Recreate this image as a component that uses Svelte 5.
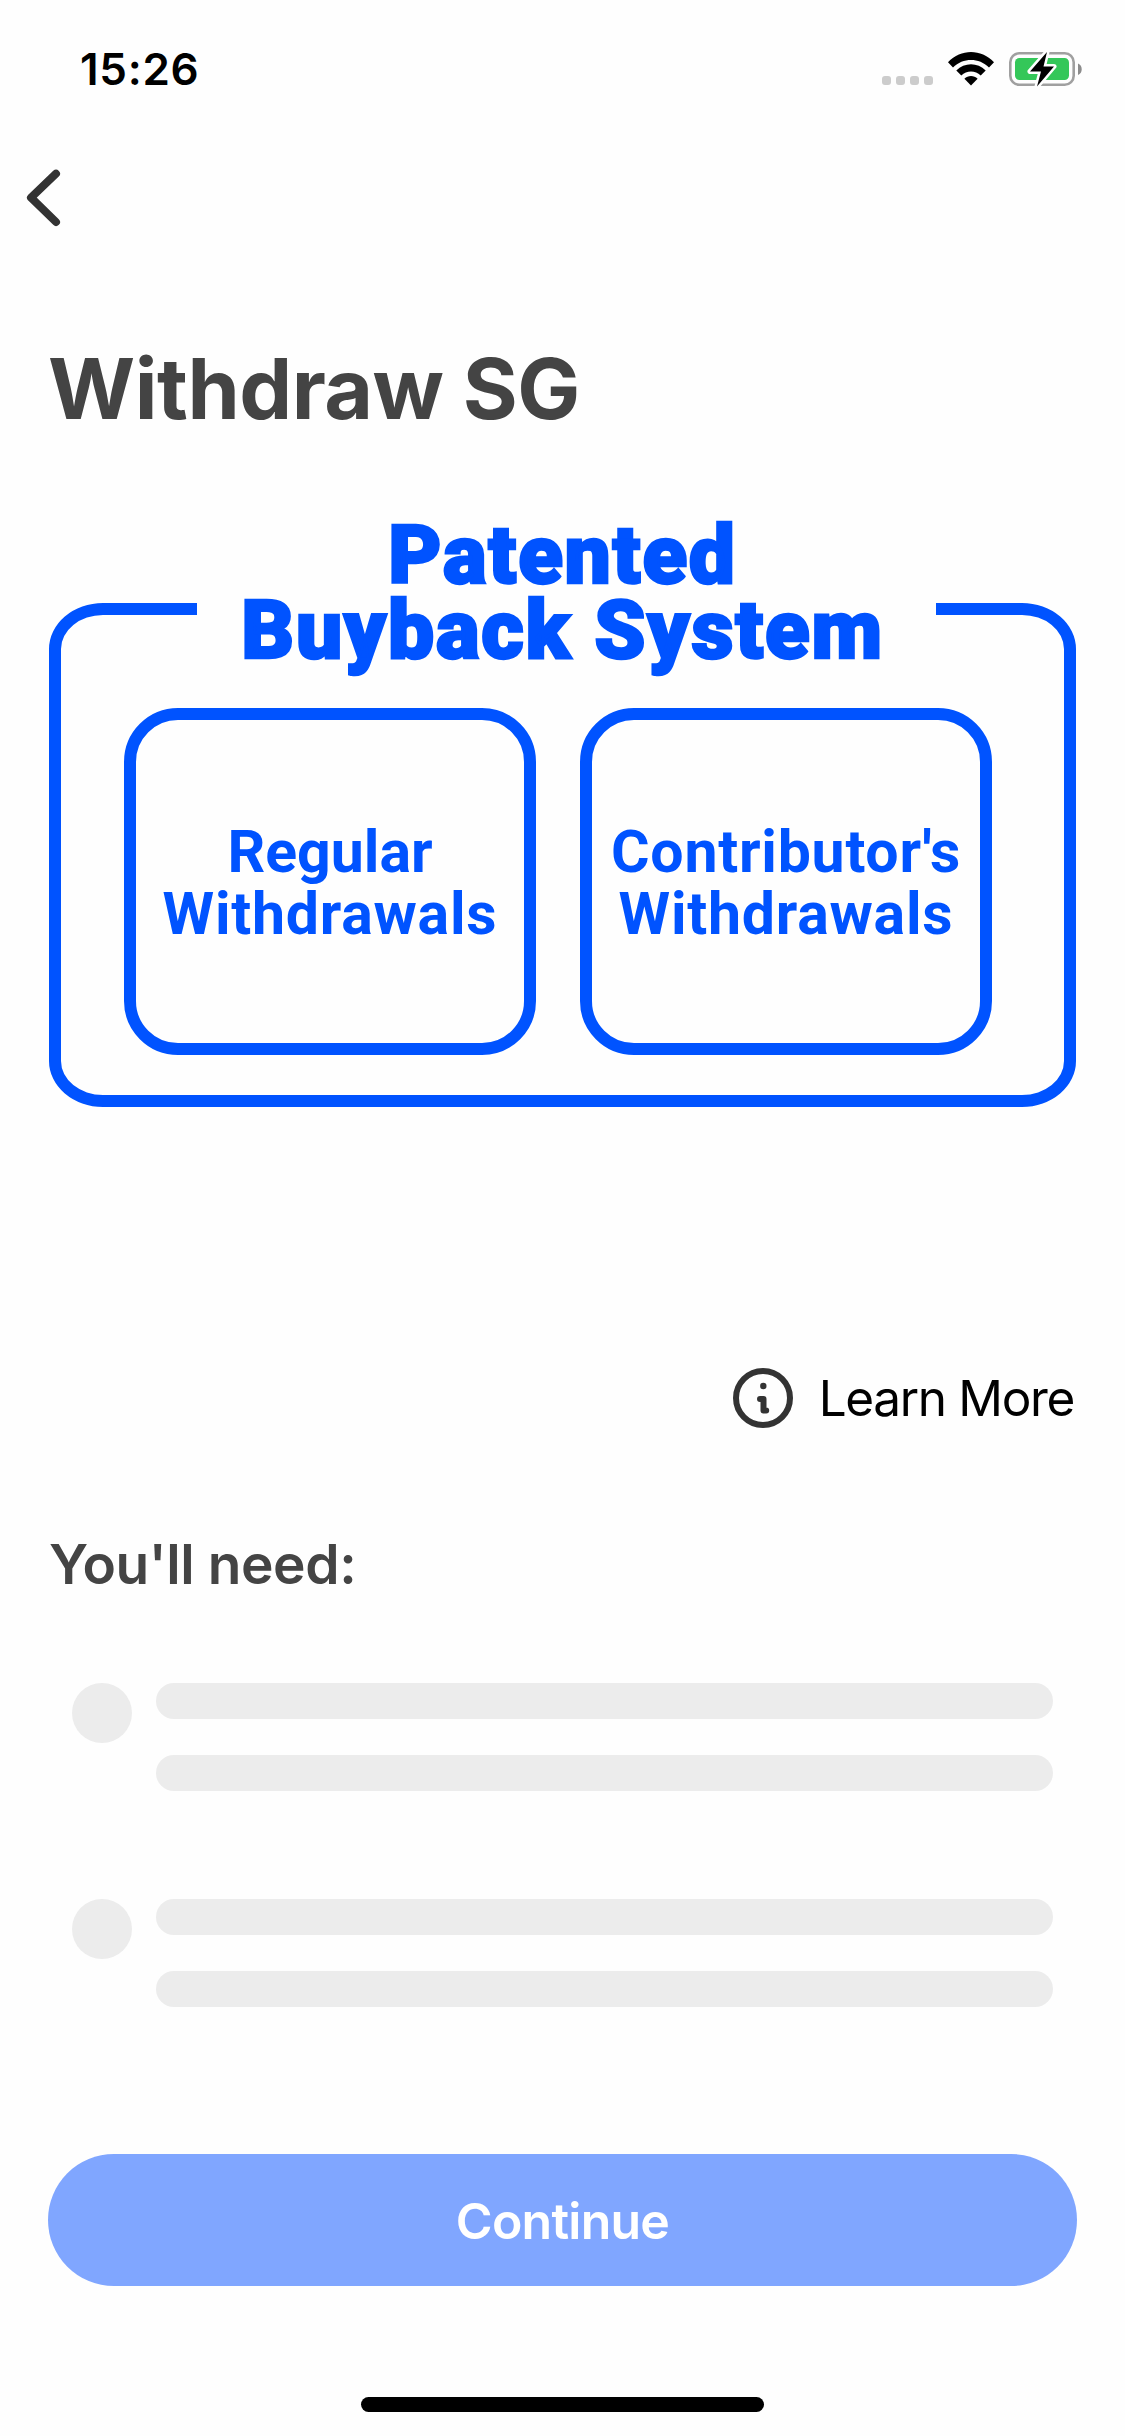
<script>
  const requirements = [1, 2];
  const cards = [
    ['Regular', 'Withdrawals'],
    ["Contributor's", 'Withdrawals'],
  ];
</script>

<div class="screen">
  <header class="status">
    <time>15:26</time>
    <div class="indicators">
      <div class="signal"><i></i><i></i><i></i><i></i></div>
      <svg class="wifi" width="46" height="34" viewBox="0 0 46 34">
        <path d="M0 10.3C13-3.3 33-3.3 46 10.3L41 15.4C31 5.500 15 5.500 5 15.400Z" />
        <path d="M8.300 18.500C16.500 10 29.500 10 37.700 18.500L32.700 23.600C27.300 18 18.700 18 13.300 23.600Z" />
        <path d="M16.400 26.700C20 23 26 23 29.600 26.700L23 33.400Z" />
      </svg>
      <svg class="battery" width="74" height="38" viewBox="0 0 74 38">
        <rect x="1.300" y="3.300" width="63.400" height="31.400" rx="9" fill="none" stroke="#a0a0a0" stroke-width="2.600" />
        <path d="M69 13.500C74 15.500 74 23 69 25Z" fill="#8c8c8c" />
        <rect x="6" y="8" width="54" height="22" rx="4.500" fill="#34c759" />
        <path d="M38 2L21 21.500H32L28 36.500L45 16.500H34.500Z" fill="#000" stroke="#fff" stroke-width="5" stroke-linejoin="round" paint-order="stroke" />
      </svg>
    </div>
  </header>

  <nav>
    <svg width="48" height="68" viewBox="0 0 48 68">
      <path d="M37 9.700L12 33.700L37 58" fill="none" />
    </svg>
  </nav>

  <h1>Withdraw SG</h1>

  <section class="diagram">
    <div class="frame">
      <h2><span>Patented</span><span>Buyback System</span></h2>
      <div class="cards">
        {#each cards as [first, second]}
          <div class="card"><span class:tight={first === 'Regular'}>{first}</span><span>{second}</span></div>
        {/each}
      </div>
    </div>
  </section>

  <div class="learn">
    <svg width="60" height="60" viewBox="0 0 60 60">
      <circle cx="30" cy="30" r="27" fill="none" stroke="#333" stroke-width="6" />
      <circle cx="30.300" cy="18" r="3.200" fill="#333" />
      <path d="M27 31H30.500V42.500H33.200" fill="none" stroke="#333" stroke-width="6" stroke-linecap="round" stroke-linejoin="round" />
    </svg>
    <span>Learn More</span>
  </div>

  <h3>You'll need:</h3>

  <div class="list">
    {#each requirements as id (id)}
      <div class="item">
        <div class="dot"></div>
        <div class="bars"><div></div><div></div></div>
      </div>
    {/each}
  </div>

  <button>Continue</button>
  <div class="home"></div>
</div>

<style>
  :global(body) { margin: 0; background: #fff; }
  .screen {
    box-sizing: border-box;
    width: 1125px;
    height: 2436px;
    padding: 0 48px;
    display: flex;
    flex-direction: column;
    overflow: hidden;
    background: #fefefe;
    font-family: Inter, 'Liberation Sans', sans-serif;
  }
  .status {
    height: 138px;
    flex: none;
    display: flex;
    justify-content: space-between;
    align-items: center;
    margin: 0 -6px 0 32px;
  }
  time { font-size: 44px; font-weight: 600; line-height: 54px; letter-spacing: 0.7px; }
  .indicators { display: flex; align-items: center; }
  .signal { display: flex; gap: 5px; margin: 23px 15px 0 0; }
  .signal i { width: 9px; height: 9px; border-radius: 3px; background: #ccc; }
  .wifi { margin-right: 15px; }
  nav { height: 120px; flex: none; display: flex; align-items: center; margin-left: -29px; }
  nav path { stroke: #333; stroke-width: 8; stroke-linecap: round; stroke-linejoin: round; }
  h1 { margin: 80px 0 0 0; font-size: 84px; line-height: 102px; font-weight: 700; color: #444; letter-spacing: -0.5px; white-space: nowrap; }
  .diagram { margin: 163px 1px 0 1px; }
  .frame {
    box-sizing: border-box;
    height: 504px;
    border: 12px solid #0053ff;
    border-radius: 54px / 46px;
    display: flex;
    flex-direction: column;
    align-items: center;
    color: #0053ff;
    font-family: Roboto, Inter, sans-serif;
  }
  h2 {
    box-sizing: border-box;
    width: 739px;
    height: 173px;
    flex: none;
    margin: -97px 0 0 8px;
    padding-right: 8px;
    background: #fefefe;
    display: flex;
    flex-direction: column;
    align-items: center;
    font-size: 82px;
    line-height: 74.500px;
    font-weight: 900;
    letter-spacing: 1.700px;
    -webkit-text-stroke: 2.500px #0053ff;
    white-space: nowrap;
  }
  .cards { display: flex; gap: 44px; margin: 17px 9px 0 0; }
  .card {
    box-sizing: border-box;
    width: 412px;
    height: 347px;
    padding-top: 2px;
    border: 12px solid #0053ff;
    border-radius: 54px;
    display: flex;
    flex-direction: column;
    align-items: center;
    justify-content: center;
    font-size: 59px;
    line-height: 62px;
    font-weight: 700;
    letter-spacing: 0.750px;
    white-space: nowrap;
  }
  .tight { letter-spacing: 0; }
  .learn { display: flex; align-items: center; justify-content: flex-end; gap: 26px; margin: 261px 3px 0 0; height: 60px; font-size: 49.500px; letter-spacing: -1.350px; }
  h3 { margin: 103px 0 0 1px; font-size: 55px; line-height: 66px; font-weight: 600; color: #444; letter-spacing: -0.4px; }
  .list { margin: 86px 24px 0; display: flex; flex-direction: column; gap: 108px; }
  .item { display: flex; gap: 24px; }
  .dot { width: 60px; height: 60px; border-radius: 50%; background: #ececec; }
  .bars { flex: 1; display: flex; flex-direction: column; gap: 36px; }
  .bars div { height: 36px; border-radius: 18px; background: #ececec; }
  button { margin: 147px 0 0; padding: 2px 0 0; height: 132px; flex: none; border: 0; border-radius: 66px; background: #80a6ff; color: #fff; font: 600 50px Inter, sans-serif; letter-spacing: -0.750px; }
  .home { width: 403px; height: 15px; border-radius: 8px; background: #000; margin: 111px auto 0; }
</style>
